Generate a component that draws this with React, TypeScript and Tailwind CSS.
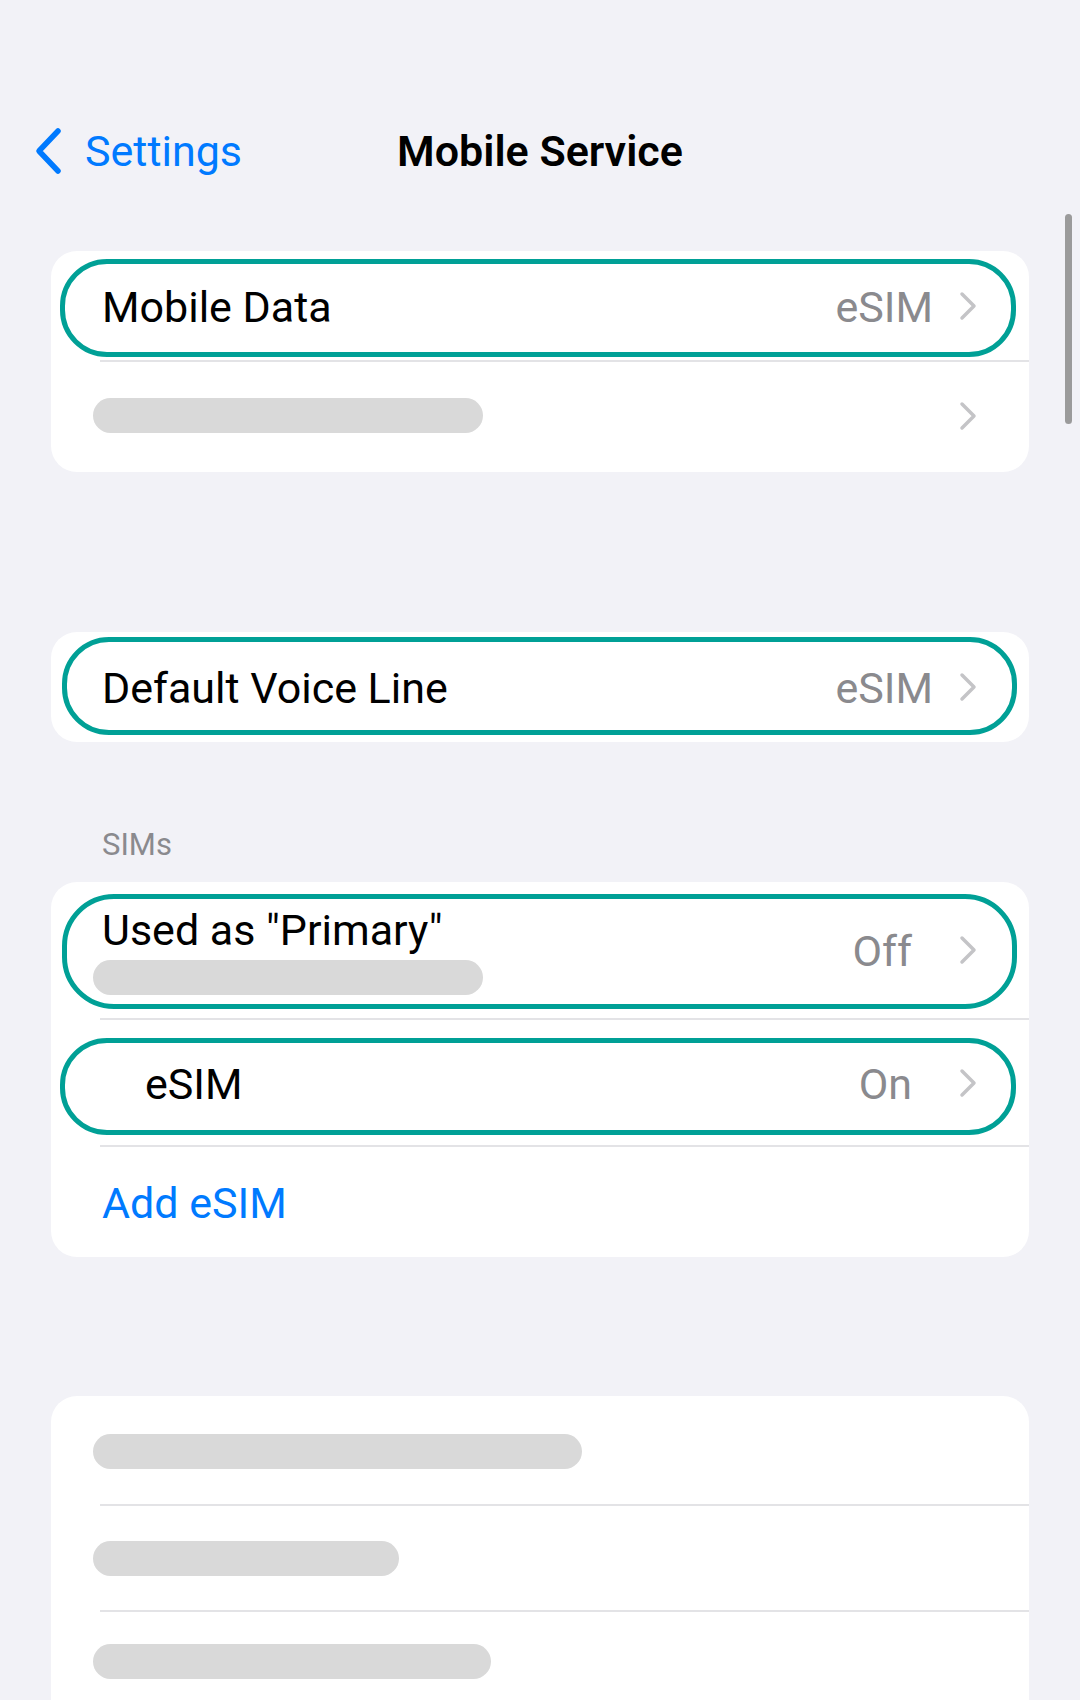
import React from "react"

const font = "font-['Roboto',sans-serif]"
const label = "pt-[2px] text-[43px] leading-[50px] text-black"
const value = "pt-[2px] text-[43px] leading-[50px] text-[#8a8a8e]"

function Chevron() {
  return (
    <svg width="20" height="30" viewBox="0 0 20 30" className="shrink-0">
      <polyline
        points="4,3 16,15 4,27"
        fill="none"
        stroke="#c4c4c7"
        strokeWidth="3.5"
        strokeLinecap="round"
        strokeLinejoin="round"
      />
    </svg>
  )
}

function BackChevron() {
  return (
    <svg width="30" height="48" viewBox="0 0 30 48" className="shrink-0">
      <polyline
        points="25,4 6,24 25,44"
        fill="none"
        stroke="#007aff"
        strokeWidth="5.5"
        strokeLinecap="round"
        strokeLinejoin="round"
      />
    </svg>
  )
}

function Separator() {
  return <div className="ml-[49px] h-[2px] bg-[#e3e3e6]" />
}

function Bar({ width }: { width: string }) {
  return <div className={`h-[35px] rounded-full bg-[#d9d9d9] ${width}`} />
}

export default function App() {
  return (
    <div className={`relative h-[1700px] w-[1080px] overflow-hidden bg-[#f2f2f7] ${font}`}>
      {/* scroll indicator */}
      <div className="absolute left-[1065px] top-[214px] h-[210px] w-[7px] rounded-full bg-[#9b9b9b]" />

      {/* nav bar */}
      <div className="pt-[127px]">
        <div className="grid h-[48px] grid-cols-[1fr_auto_1fr] items-center">
          <div className="flex items-center gap-[22px] pl-[33px]">
            <BackChevron />
            <span className="text-[43px] leading-[48px] text-[#007aff]">Settings</span>
          </div>
          <span className="text-[43px] font-semibold leading-[48px] text-black">Mobile Service</span>
          <div />
        </div>
      </div>

      {/* mobile data */}
      <div className="mx-[51px] mt-[76px] rounded-[26px] bg-white">
        <div className="relative flex h-[109px] items-center pl-[51px] pr-[51px]">
          <div className="absolute left-[9px] right-[13px] top-[8px] bottom-[3px] rounded-[47px] border-[5px] border-[#00a096]" />
          <span className={`flex-1 ${label}`}>Mobile Data</span>
          <span className={`mr-[25px] ${value}`}>eSIM</span>
          <Chevron />
        </div>
        <Separator />
        <div className="flex h-[110px] items-center pb-[3px] pl-[42px] pr-[51px]">
          <div className="flex-1">
            <Bar width="w-[390px]" />
          </div>
          <Chevron />
        </div>
      </div>

      {/* default voice line */}
      <div className="mx-[51px] mt-[160px] rounded-[26px] bg-white">
        <div className="relative flex h-[110px] items-center pl-[51px] pr-[51px]">
          <div className="absolute left-[11px] right-[12px] top-[5px] bottom-[7px] rounded-[47px] border-[5px] border-[#00a096]" />
          <span className={`flex-1 ${label}`}>Default Voice Line</span>
          <span className={`mr-[25px] ${value}`}>eSIM</span>
          <Chevron />
        </div>
      </div>

      {/* SIMs */}
      <div className="mx-[51px] mt-[85px] mb-[19px] pl-[51px] text-[31px] leading-[36px] text-[#8a8a8e]">SIMs</div>
      <div className="mx-[51px] rounded-[26px] bg-white">
        <div className="relative flex h-[136px] items-center pl-[51px] pr-[51px]">
          <div className="absolute left-[11px] right-[12px] top-[12px] bottom-[9px] rounded-[52px] border-[5px] border-[#00a096]" />
          <div className="flex flex-1 flex-col items-start">
            <span className="text-[43px] leading-[50px] text-black">Used as "Primary"</span>
            <div className="-ml-[9px] mt-[5px]">
              <Bar width="w-[390px]" />
            </div>
          </div>
          <span className={`mr-[46px] ${value}`}>Off</span>
          <Chevron />
        </div>
        <Separator />
        <div className="relative flex h-[125px] items-center pl-[94px] pr-[51px]">
          <div className="absolute left-[9px] right-[13px] top-[18px] bottom-[10px] rounded-[47px] border-[5px] border-[#00a096]" />
          <span className={`flex-1 ${label}`}>eSIM</span>
          <span className={`mr-[46px] ${value}`}>On</span>
          <Chevron />
        </div>
        <Separator />
        <div className="flex h-[110px] items-center pl-[51px] pr-[51px]">
          <span className="pt-[2px] text-[43px] leading-[50px] text-[#007aff]">Add eSIM</span>
        </div>
      </div>

      {/* hidden rows */}
      <div className="mx-[51px] mt-[139px] rounded-t-[26px] bg-white">
        <div className="flex h-[108px] items-center pt-[3px] pl-[42px]">
          <Bar width="w-[489px]" />
        </div>
        <Separator />
        <div className="flex h-[104px] items-center pl-[42px]">
          <Bar width="w-[306px]" />
        </div>
        <Separator />
        <div className="flex h-[98px] items-center pl-[42px]">
          <Bar width="w-[398px]" />
        </div>
      </div>
    </div>
  )
}
